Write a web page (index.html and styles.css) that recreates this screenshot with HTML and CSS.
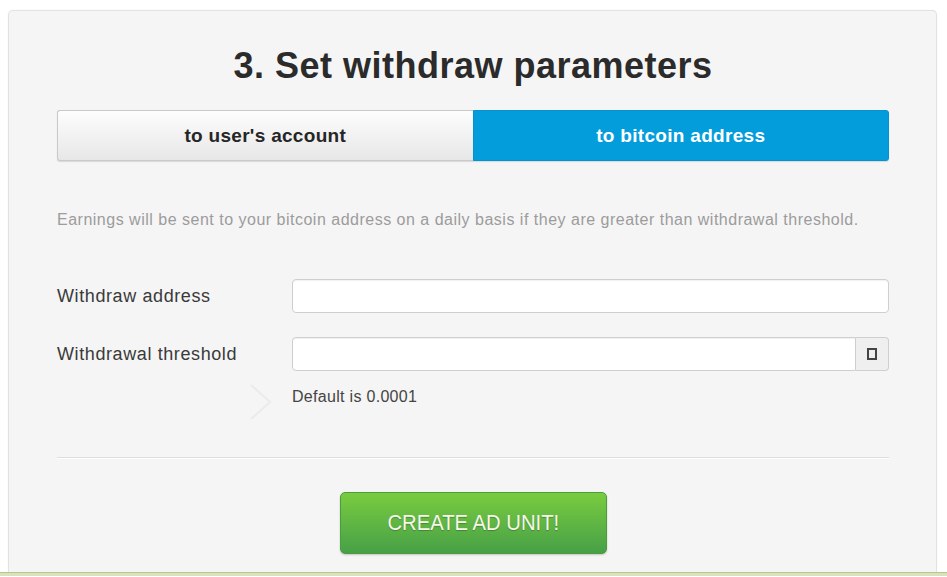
FILE: index.html
```html
<!DOCTYPE html>
<html lang="en">
<head>
    <meta charset="UTF-8">
    <meta name="viewport" content="width=device-width, initial-scale=1.0">
    <title>Set withdraw parameters</title>
    <link rel="stylesheet" href="styles.css">
</head>
<body>
    <div class="page">
        <div class="panel">
            <h1>3. Set withdraw parameters</h1>
            <div class="tabs">
                <button class="tab">to user's account</button>
                <button class="tab active">to bitcoin address</button>
            </div>
            <p class="note">Earnings will be sent to your bitcoin address on a daily basis if they are greater than withdrawal threshold.</p>
            <div class="form">
                <label class="label" for="address">Withdraw address</label>
                <input class="field" type="text" id="address">

                <label class="label" for="threshold">Withdrawal threshold</label>
                <div class="input-group">
                    <input class="field" type="text" id="threshold">
                    <span class="addon"><span class="addon-icon"></span></span>
                </div>

                <div class="hint-arrow">
                    <svg width="24" height="36" viewBox="0 0 24 36">
                        <polyline points="2,1 21,18 2,35" fill="none" stroke="#ebebeb" stroke-width="2"/>
                    </svg>
                </div>
                <div class="help">Default is 0.0001</div>
            </div>
            <hr class="divider">
            <div class="actions">
                <button class="create"><span>CREATE AD UNIT!</span></button>
            </div>
        </div>
        <div class="footer-line"></div>
    </div>
</body>
</html>
```

FILE: styles.css
```css
body {
    margin: 0;
    background: #fff;
    font-family: Arial, "Liberation Sans", Helvetica, sans-serif;
}
button, input {
    font-family: Arial, "Liberation Sans", Helvetica, sans-serif;
}
.page {
    padding: 10px 10px 0 8px;
}
.panel {
    background: #f5f5f5;
    border: 1px solid #e2e2e2;
    border-bottom: none;
    border-radius: 5px 5px 0 0;
    padding: 35px 47px 18px 48px;
    box-shadow: 0 0 2px rgba(0, 0, 0, 0.05);
}
h1 {
    margin: 0;
    text-align: center;
    font-size: 36px;
    line-height: 40px;
    letter-spacing: 0.5px;
    color: #2b2b2b;
}
.tabs {
    display: flex;
    margin-top: 24px;
    height: 51px;
}
.tab {
    flex: 1;
    font-size: 19px;
    font-weight: bold;
    letter-spacing: 0.3px;
    cursor: pointer;
    border: 1px solid #c9c9c9;
    border-right: none;
    border-radius: 3px 0 0 3px;
    color: #262626;
    background: linear-gradient(#fdfdfd, #e7e7e7);
    box-shadow: 0 1px 1px rgba(0, 0, 0, 0.12);
}
.tab.active {
    color: #fff;
    background: #049ddc;
    border: 1px solid #0592cf;
    border-radius: 0 3px 3px 0;
}
.note {
    margin: 49px 0 0;
    font-size: 16px;
    line-height: 19px;
    letter-spacing: 0.5px;
    color: #9c9c9c;
}
.form {
    display: grid;
    grid-template-columns: 235px 1fr;
    row-gap: 24px;
    margin-top: 50px;
    align-items: center;
}
.label {
    font-size: 18px;
    letter-spacing: 0.6px;
    color: #3a3a3a;
}
.field {
    height: 34px;
    box-sizing: border-box;
    border: 1px solid #cfcfcf;
    border-radius: 4px;
    background: #fff;
    box-shadow: inset 0 1px 1px rgba(0, 0, 0, 0.06);
    font-size: 15px;
    padding: 0 8px;
    width: 100%;
}
.input-group {
    display: flex;
}
.input-group .field {
    border-radius: 4px 0 0 4px;
}
.addon {
    width: 33px;
    flex: none;
    box-sizing: border-box;
    border: 1px solid #cfcfcf;
    border-left: none;
    border-radius: 0 4px 4px 0;
    background: #efefef;
    display: flex;
    align-items: center;
    justify-content: center;
}
.addon-icon {
    width: 6px;
    height: 8px;
    border: 2px solid #444;
}
.hint-arrow {
    margin-top: -11px;
    padding-left: 192px;
    height: 36px;
}
.help {
    margin-top: -11px;
    font-size: 16px;
    letter-spacing: 0.3px;
    color: #444;
    align-self: start;
    padding-top: 4px;
}
.divider {
    margin: 37px 0 0;
    border: none;
    border-top: 1px solid #dedede;
    border-bottom: 1px solid #fff;
}
.actions {
    display: flex;
    justify-content: center;
    margin-top: 33px;
}
.create {
    width: 267px;
    height: 62px;
    border: 1px solid #4c9c3c;
    border-radius: 5px;
    background: linear-gradient(#79cc3f, #47a047);
    color: #f6f6ea;
    font-size: 22px;
    cursor: pointer;
    text-shadow: 0 1px 1px rgba(0, 0, 0, 0.25);
    box-shadow: 0 1px 2px rgba(0, 0, 0, 0.2);
}
.create span {
    display: inline-block;
    transform: scaleX(0.92);
}
.footer-line {
    margin: 0 -10px 0 -8px;
    height: 3px;
    border-top: 1px solid #b7c68f;
    background: #d9e2bd;
}
```
